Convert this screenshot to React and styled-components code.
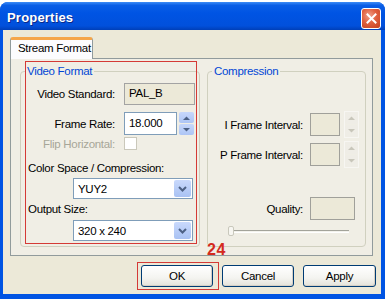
import React from "react";
import styled, { createGlobalStyle } from "styled-components";

const Global = createGlobalStyle`
  html, body { margin: 0; padding: 0; background: #ffffff; }
  body { font-family: "Liberation Sans", Arial, sans-serif; }
  * { box-sizing: border-box; }
`;

const Page = styled.div`
  width: 389px;
  height: 299px;
  padding-top: 2px;
  position: relative;
  overflow: hidden;
`;

const Window = styled.div`
  width: 385px;
  height: 297px;
  background: #0054e3;
  border-radius: 8px 8px 0 0;
  display: flex;
  flex-direction: column;
  padding: 0 4px 5px 3px;
`;

const TitleBar = styled.div`
  height: 28px;
  margin: 0 -4px 0 -3px;
  padding: 0 4px 0 7px;
  border-radius: 8px 8px 0 0;
  background: linear-gradient(#3d8cf6 0%, #0a5ee6 12%, #0054e3 40%, #0150dc 85%, #003fb8 100%);
  display: flex;
  align-items: center;
  justify-content: space-between;
`;

const Title = styled.span`
  color: #ffffff;
  font: bold 13px "Liberation Sans", Arial, sans-serif;
  letter-spacing: 0.2px;
  text-shadow: 1px 1px 0 #0a2a8a;
  margin-top: 2px;
`;

const CloseButton = styled.div`
  width: 20px;
  height: 21px;
  margin-top: 5px;
  border: 1px solid #ffffff;
  border-radius: 3px;
  background: radial-gradient(circle at 40% 35%, #f0a08a 0%, #e0603f 45%, #c4401e 100%);
  display: flex;
  align-items: center;
  justify-content: center;
`;

const Client = styled.div`
  flex: 1;
  background: #ece9d8;
  padding: 7px 5px 0 7px;
  display: flex;
  flex-direction: column;
`;

const TabRow = styled.div`
  display: flex;
  height: 22px;
  position: relative;
  z-index: 1;
`;

const Tab = styled.div`
  width: 83px;
  height: 22px;
  background: #fcfcfe;
  border: 1px solid #919b9c;
  border-bottom: none;
  border-top: 3px solid #f5a64a;
  border-radius: 3px 3px 0 0;
  font-size: 11.5px;
  letter-spacing: -0.3px;
  color: #000;
  padding: 2px 0 0 7px;
`;

const Panel = styled.div`
  width: 363px;
  height: 198px;
  margin-top: -1px;
  background: #f0eee5;
  border: 1px solid #919b9c;
  padding: 6px 6px 8px 9px;
  display: flex;
  gap: 7px;
`;

const Group = styled.fieldset`
  margin: 0;
  min-width: 0;
  flex: 0 0 ${(p) => p.$w}px;
  width: ${(p) => p.$w}px;
  border: 1px solid #d0d0bf;
  border-radius: 4px;
  padding: 0;
  position: relative;
`;

const Legend = styled.legend`
  color: #0046d5;
  font-size: 11.5px;
  letter-spacing: -0.3px;
  padding: 0 2px;
  margin-left: 4px;
`;

const VideoBody = styled.div`
  display: grid;
  grid-template-columns: 87px auto;
  column-gap: 9px;
  padding: 6px 0 0 7px;
  align-items: center;
`;

const Label = styled.span`
  font-size: 11.5px;
  letter-spacing: -0.3px;
  color: ${(p) => (p.$disabled ? "#a7a698" : "#000")};
  text-align: right;
  white-space: nowrap;
  margin-top: ${(p) => p.$mt || 0}px;
`;

const Static = styled.div`
  width: 71px;
  height: 22px;
  border: 1px solid #a3a3a3;
  background: #ece9d8;
  font-size: 11.5px;
  letter-spacing: -0.3px;
  padding: 3px 0 0 4px;
`;

const SpinWrap = styled.div`
  display: flex;
  gap: 2px;
  align-items: center;
  margin-top: ${(p) => p.$mt || 0}px;
`;

const Edit = styled.div`
  width: ${(p) => p.$w}px;
  height: 23px;
  border: 1px solid ${(p) => (p.$disabled ? "#a0a09a" : "#7f9db9")};
  background: ${(p) => (p.$disabled ? "#ece9d8" : "#ffffff")};
  font-size: 11.5px;
  letter-spacing: -0.3px;
  padding: 4px 0 0 4px;
`;

const Spin = styled.div`
  width: 15px;
  height: ${(p) => p.$h || 23}px;
  display: flex;
  flex-direction: column;
  gap: 1px;
  margin-left: ${(p) => p.$ml || 0}px;
  ${(p) => p.$disabled && "border: 1px solid #f7f6f2;"}
`;

const SpinHalf = styled.div`
  flex: 1;
  background: ${(p) => (p.$disabled ? "#efede6" : "linear-gradient(#c7d7fb, #adc5f5)")};
  border-radius: 2px;
  display: flex;
  align-items: center;
  justify-content: center;
`;

const Check = styled.div`
  width: 13px;
  height: 13px;
  border: 1px solid #cac8bb;
  background: #ffffff;
  margin: 2px 0;
`;

const FullLabel = styled.div`
  grid-column: 1 / span 2;
  font-size: 11.5px;
  letter-spacing: -0.3px;
  margin-top: ${(p) => p.$mt}px;
`;

const Combo = styled.div`
  grid-column: 1 / span 2;
  margin: ${(p) => p.$mt}px 0 0 45px;
  width: 120px;
  height: 21px;
  border: 1px solid #7f9db9;
  background: #fff;
  display: flex;
  align-items: center;
  justify-content: space-between;
  padding: 1px 1px 1px 4px;
  font-size: 11.5px;
  letter-spacing: -0.3px;
`;

const ComboBtn = styled.div`
  width: 17px;
  height: 17px;
  border-radius: 2px;
  background: linear-gradient(#c9d9fc, #a9c2f3);
  display: flex;
  align-items: center;
  justify-content: center;
`;

const CompBody = styled.div`
  display: flex;
  flex-direction: column;
  padding: 34px 0 0 0;
`;

const CompRow = styled.div`
  display: flex;
  align-items: center;
  margin-top: ${(p) => p.$mt || 0}px;
`;

const CompLabel = styled.span`
  width: 95px;
  text-align: right;
  font-size: 11.5px;
  letter-spacing: -0.3px;
  margin-right: 7px;
`;

const Slider = styled.div`
  margin: 6px 0 0 20px;
  width: 121px;
  height: 10px;
  position: relative;
  display: flex;
  align-items: center;
`;

const Track = styled.div`
  width: 100%;
  height: 3px;
  border-top: 1px solid #a3a39a;
  border-bottom: 1px solid #ffffff;
  background: #f3f2ec;
`;

const Thumb = styled.div`
  position: absolute;
  left: 0;
  top: 0;
  width: 6px;
  height: 10px;
  border: 1px solid #c9c8bc;
  border-radius: 2px;
  background: #f7f6f1;
`;

const ButtonRow = styled.div`
  display: flex;
  justify-content: flex-end;
  gap: 9px;
  margin-top: 9px;
`;

const Button = styled.div`
  width: ${(p) => p.$w}px;
  height: 22px;
  border: 1px solid #003c74;
  border-radius: 3px;
  background: linear-gradient(#ffffff 0%, #f4f4f0 60%, #e3e2da 100%);
  font-size: 11.5px;
  letter-spacing: -0.3px;
  display: flex;
  align-items: center;
  justify-content: center;
  box-shadow: inset -1px -1px 0 #d6d0c5;
`;

const RedBox = styled.div`
  position: absolute;
  left: ${(p) => p.$x}px;
  top: ${(p) => p.$y}px;
  width: ${(p) => p.$w}px;
  height: ${(p) => p.$h}px;
  border: 1px solid #d43a36;
  pointer-events: none;
`;

const Badge = styled.span`
  position: absolute;
  left: 207px;
  top: 241px;
  color: #d42a1e;
  font: bold 16px "Liberation Sans", Arial, sans-serif;
  letter-spacing: 0.5px;
`;

const Up = ({ c = "#4d6185" }) => (
  <svg width="7" height="4" viewBox="0 0 7 4"><path d="M0 4 L3.5 0.5 L7 4 Z" fill={c} /></svg>
);
const Down = ({ c = "#4d6185" }) => (
  <svg width="7" height="4" viewBox="0 0 7 4"><path d="M0 0 L3.5 3.5 L7 0 Z" fill={c} /></svg>
);
const Chevron = () => (
  <svg width="9" height="6" viewBox="0 0 9 6"><path d="M1 1 L4.5 4.5 L8 1" stroke="#4d6185" strokeWidth="2" fill="none" /></svg>
);

const DisabledSpin = () => (
  <Spin $disabled $h={27} $ml={4}>
    <SpinHalf $disabled><Up c="#c8c6ba" /></SpinHalf>
    <SpinHalf $disabled><Down c="#c8c6ba" /></SpinHalf>
  </Spin>
);

export default function App() {
  return (
    <Page>
      <Global />
      <Window>
        <TitleBar>
          <Title>Properties</Title>
          <CloseButton>
            <svg width="11" height="11" viewBox="0 0 11 11">
              <path d="M1.5 1.5 L9.5 9.5 M9.5 1.5 L1.5 9.5" stroke="#fff" strokeWidth="2" strokeLinecap="square" />
            </svg>
          </CloseButton>
        </TitleBar>
        <Client>
          <TabRow>
            <Tab>Stream Format</Tab>
          </TabRow>
          <Panel>
            <Group $w={180}>
              <Legend>Video Format</Legend>
              <VideoBody>
                <Label>Video Standard:</Label>
                <Static>PAL_B</Static>
                <Label $mt={7}>Frame Rate:</Label>
                <SpinWrap $mt={7}>
                  <Edit $w={53}>18.000</Edit>
                  <Spin>
                    <SpinHalf><Up /></SpinHalf>
                    <SpinHalf><Down /></SpinHalf>
                  </Spin>
                </SpinWrap>
                <Label $disabled>Flip Horizontal:</Label>
                <Check />
                <FullLabel $mt={10}>Color Space / Compression:</FullLabel>
                <Combo $mt={4}>
                  YUY2
                  <ComboBtn><Chevron /></ComboBtn>
                </Combo>
                <FullLabel $mt={4}>Output Size:</FullLabel>
                <Combo $mt={5}>
                  320 x 240
                  <ComboBtn><Chevron /></ComboBtn>
                </Combo>
              </VideoBody>
            </Group>
            <Group $w={159}>
              <Legend>Compression</Legend>
              <CompBody>
                <CompRow>
                  <CompLabel>I Frame Interval:</CompLabel>
                  <Edit $w={30} $disabled />
                  <DisabledSpin />
                </CompRow>
                <CompRow $mt={3}>
                  <CompLabel>P Frame Interval:</CompLabel>
                  <Edit $w={30} $disabled />
                  <DisabledSpin />
                </CompRow>
                <CompRow $mt={29}>
                  <CompLabel>Quality:</CompLabel>
                  <Edit $w={45} $disabled />
                </CompRow>
                <Slider>
                  <Track />
                  <Thumb />
                </Slider>
              </CompBody>
            </Group>
          </Panel>
          <ButtonRow>
            <Button $w={72}>OK</Button>
            <Button $w={72}>Cancel</Button>
            <Button $w={73}>Apply</Button>
          </ButtonRow>
        </Client>
      </Window>
      <RedBox $x={25} $y={61} $w={172} $h={183} />
      <RedBox $x={137} $y={262} $w={82} $h={28} />
      <Badge>24</Badge>
    </Page>
  );
}
